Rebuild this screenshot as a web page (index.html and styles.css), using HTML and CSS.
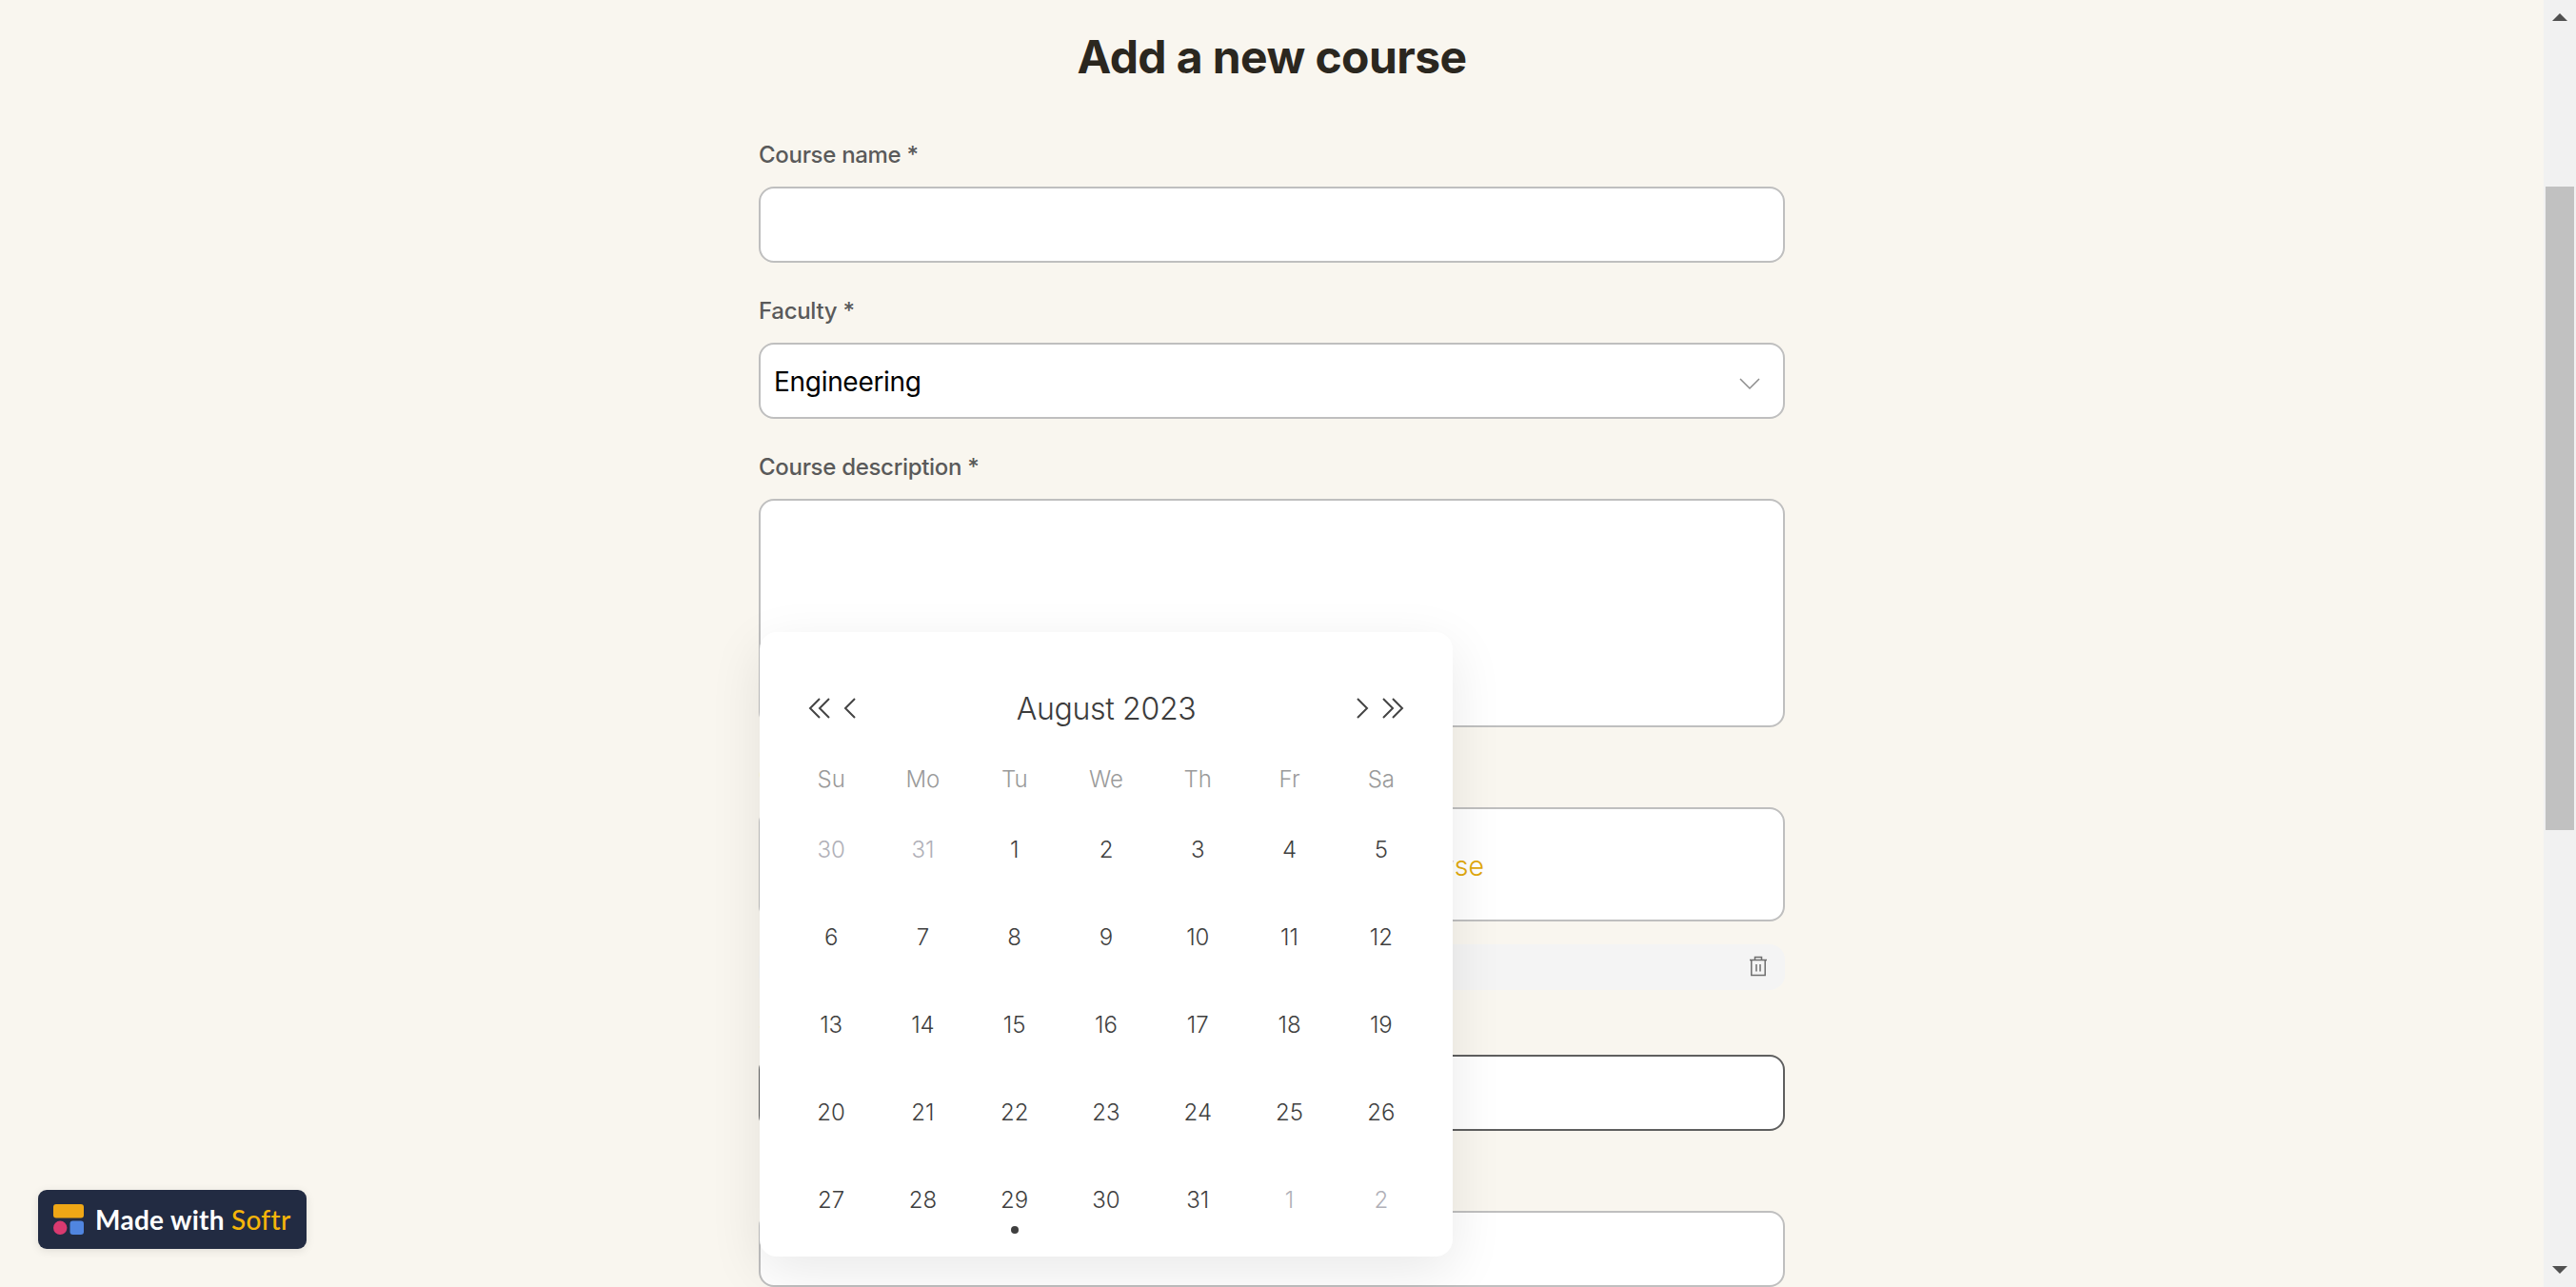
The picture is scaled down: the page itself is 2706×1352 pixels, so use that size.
FILE: index.html
```html
<!DOCTYPE html>
<html lang="en">
<head>
<meta charset="utf-8">
<title>Add a new course</title>
<link rel="stylesheet" href="styles.css">
</head>
<body>
<div class="page">
  <main class="main">
    <h1 class="title">Add a new course</h1>
    <form class="form">
      <div class="field">
        <label class="label">Course name *</label>
        <input class="control" type="text">
      </div>
      <div class="field">
        <label class="label">Faculty *</label>
        <div class="control select">
          <span>Engineering</span>
          <svg class="chevron" width="24" height="14" viewBox="0 0 24 14"><path d="M2 2 L12 12 L22 2" fill="none" stroke="#8c8c8c" stroke-width="1.5"/></svg>
        </div>
      </div>
      <div class="field">
        <label class="label">Course description *</label>
        <textarea class="control area"></textarea>
      </div>
      <div class="field field-file">
        <label class="label">Course image *</label>
        <div class="control upload">Drag and drop your file or browse</div>
        <div class="file-row">
          <svg width="20" height="22" viewBox="0 0 20 22" fill="none" stroke="#6e6e6e" stroke-width="1.5"><path d="M1 4.5 H19 M2.8 4.5 V20.5 H17.2 V4.5 M6.5 4.5 V1.5 H13.5 V4.5 M8 9 V16.5 M12 9 V16.5"/></svg>
        </div>
      </div>
      <div class="field">
        <label class="label">Start date *</label>
        <input class="control focus" type="text">
      </div>
      <div class="field">
        <label class="label">End date *</label>
        <input class="control" type="text">
      </div>

      <div class="calendar">
        <div class="cal-head">
          <div class="cal-nav">
            <svg width="24" height="24" viewBox="0 0 24 24"><path d="M12 2 L2 12 L12 22 M22 2 L12 12 L22 22" class="nav-stroke"/></svg>
            <svg width="14" height="24" viewBox="0 0 14 24"><path d="M12 2 L2 12 L12 22" class="nav-stroke"/></svg>
          </div>
          <div class="cal-title">August 2023</div>
          <div class="cal-nav">
            <svg width="14" height="24" viewBox="0 0 14 24"><path d="M2 2 L12 12 L2 22" class="nav-stroke"/></svg>
            <svg width="24" height="24" viewBox="0 0 24 24"><path d="M2 2 L12 12 L2 22 M12 2 L22 12 L12 22" class="nav-stroke"/></svg>
          </div>
        </div>
        <div class="cal-grid">
          <div class="wd">Su</div><div class="wd">Mo</div><div class="wd">Tu</div><div class="wd">We</div><div class="wd">Th</div><div class="wd">Fr</div><div class="wd">Sa</div>
          <div class="day off">30</div><div class="day off">31</div><div class="day">1</div><div class="day">2</div><div class="day">3</div><div class="day">4</div><div class="day">5</div>
          <div class="day">6</div><div class="day">7</div><div class="day">8</div><div class="day">9</div><div class="day">10</div><div class="day">11</div><div class="day">12</div>
          <div class="day">13</div><div class="day">14</div><div class="day">15</div><div class="day">16</div><div class="day">17</div><div class="day">18</div><div class="day">19</div>
          <div class="day">20</div><div class="day">21</div><div class="day">22</div><div class="day">23</div><div class="day">24</div><div class="day">25</div><div class="day">26</div>
          <div class="day">27</div><div class="day">28</div><div class="day today">29</div><div class="day">30</div><div class="day">31</div><div class="day off">1</div><div class="day off">2</div>
        </div>
      </div>
    </form>
    <div class="badge">
      <svg width="32" height="32" viewBox="0 0 32 32">
        <rect x="0" y="0" width="32" height="14.5" rx="3" fill="#efa716"/>
        <circle cx="7.2" cy="24.8" r="7.2" fill="#d93a70"/>
        <rect x="17.5" y="17.5" width="14.5" height="14.5" rx="3" fill="#5085e0"/>
      </svg>
      <span class="badge-text">Made with <span class="softr">Softr</span></span>
    </div>
  </main>
  <aside class="scrollbar">
    <div class="arrow-up"></div>
    <div class="thumb"></div>
    <div class="arrow-down"></div>
  </aside>
</div>
</body>
</html>
```
FILE: styles.css
```css
* { box-sizing: border-box; }
html, body { margin: 0; height: 100%; overflow: hidden; }
body { background: #f9f6ef; font-family: Inter, "Liberation Sans", sans-serif; }

.page { display: flex; height: 1352px; overflow: hidden; }
.main { flex: 1; position: relative; overflow: hidden; padding-top: 28px; }

.title {
  margin: 0 0 54px;
  text-align: center;
  font-size: 48px;
  line-height: 64px;
  font-weight: 700;
  letter-spacing: -0.6px;
  color: #2b271f;
}

.form {
  position: relative;
  width: 1078px;
  margin: 0 auto;
  display: flex;
  flex-direction: column;
  gap: 34px;
}
.field { display: flex; flex-direction: column; }
.field-file { margin-bottom: -16px; }

.label {
  height: 32px;
  line-height: 34px;
  margin-bottom: 18px;
  font-size: 24px;
  font-weight: 500;
  letter-spacing: -0.3px;
  color: #5a5a5a;
}

.control {
  display: block;
  width: 100%;
  height: 80px;
  background: #fff;
  border: 2px solid #bfbfbf;
  border-radius: 16px;
  outline: none;
  font-family: inherit;
  font-size: 28px;
}
.focus { border-color: #5f5f5f; }
.area { height: 240px; resize: none; }

.select {
  display: flex;
  align-items: center;
  justify-content: space-between;
  padding: 0 23px 0 14px;
  color: #000;
  line-height: 1;
  font-weight: 400;
  letter-spacing: -0.3px;
}
.select span { position: relative; top: 1px; }
.chevron { margin-top: 6px; }

.upload {
  height: 120px;
  padding-top: 3px;
  display: flex;
  align-items: center;
  justify-content: center;
  color: #e2a90c;
  font-weight: 300;
  font-size: 28.5px;
  white-space: pre;
}

.file-row {
  margin-top: 24px;
  height: 48px;
  background: #f4f4f4;
  border-radius: 16px;
  display: flex;
  align-items: center;
  justify-content: flex-end;
  padding-right: 18px;
  padding-bottom: 2px;
}

.calendar {
  position: absolute;
  left: 1px;
  top: 518px;
  width: 728px;
  height: 656px;
  padding: 55px 27px 14px;
  background: #fff;
  border-radius: 18px;
  box-shadow: 0 16px 56px rgba(0, 0, 0, 0.09);
}
.cal-head {
  height: 50px;
  margin-bottom: 21px;
  padding: 0 24px 0 24px;
  display: flex;
  align-items: center;
  justify-content: space-between;
}
.cal-nav { display: flex; align-items: center; gap: 13px; }
.nav-stroke { fill: none; stroke: #444; stroke-width: 2; }
.cal-title { font-size: 32px; font-weight: 300; color: #3c3c3c; letter-spacing: -0.3px; }

.cal-grid {
  display: grid;
  grid-template-columns: repeat(7, 1fr);
  grid-auto-rows: 92px;
  grid-template-rows: 56px;
  text-align: center;
}
.wd, .day {
  display: flex;
  align-items: center;
  justify-content: center;
  font-size: 24px;
  font-weight: 300;
}
.wd { color: #9a9a9a; }
.day { color: #3f3f3f; position: relative; }
.off { color: #b0b0b8; }
.today::after {
  content: "";
  position: absolute;
  left: 50%;
  bottom: 10px;
  width: 8px;
  height: 8px;
  margin-left: -4px;
  border-radius: 50%;
  background: #3f3f3f;
}

.badge {
  position: absolute;
  left: 40px;
  bottom: 40px;
  width: 282px;
  height: 62px;
  padding: 0 0 0 16px;
  display: flex;
  align-items: center;
  gap: 12px;
  background: #222b42;
  border-radius: 9px;
  box-shadow: 0 2px 10px rgba(0, 0, 0, 0.1);
}
.badge svg { flex: none; }
.badge-text {
  font-family: Lato, "Noto Sans", sans-serif;
  font-size: 28px;
  font-weight: 700;
  letter-spacing: 0.3px;
  color: #fff;
  white-space: pre;
}
.softr { color: #f5b50a; font-weight: 500; }

.scrollbar {
  width: 34px;
  flex: none;
  position: relative;
  background: #f1f1f1;
}
.thumb {
  position: absolute;
  left: 2px;
  top: 196px;
  width: 30px;
  height: 676px;
  background: #c1c1c1;
}
.arrow-up, .arrow-down {
  position: absolute;
  left: 9px;
  width: 0;
  height: 0;
  border-left: 8px solid transparent;
  border-right: 8px solid transparent;
}
.arrow-up { top: 14px; border-bottom: 8px solid #505050; }
.arrow-down { bottom: 14px; border-top: 8px solid #505050; }
```
